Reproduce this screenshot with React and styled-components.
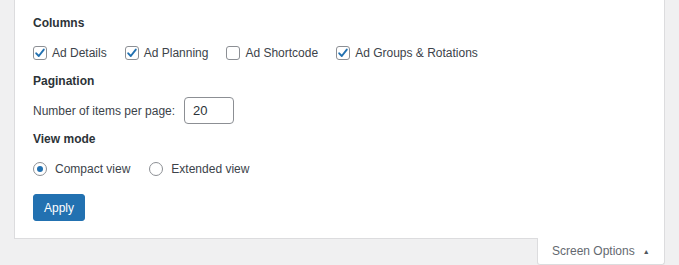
import React from "react";
import styled, { createGlobalStyle } from "styled-components";

const GlobalStyle = createGlobalStyle`
  body {
    margin: 0;
    background: #f0f0f1;
    font-family: "Liberation Sans", Arial, sans-serif;
    color: #3c434a;
  }
`;

const columns = [
  { label: "Ad Details", checked: true },
  { label: "Ad Planning", checked: true },
  { label: "Ad Shortcode", checked: false },
  { label: "Ad Groups & Rotations", checked: true },
];

const App = () => {
  return (
    <Wrapper>
      <GlobalStyle />
      <Panel>
        <Heading>Columns</Heading>
        <Row>
          {columns.map((item, index) => (
            <Option key={index}>
              <Box>
                {item.checked && (
                  <svg width="12" height="12" viewBox="0 0 12 12">
                    <path
                      d="M2.2 6.3 L4.8 9 L9.8 2.6"
                      fill="none"
                      stroke="#2271b1"
                      strokeWidth="1.9"
                      strokeLinecap="round"
                      strokeLinejoin="round"
                    />
                  </svg>
                )}
              </Box>
              {item.label}
            </Option>
          ))}
        </Row>
        <Heading>Pagination</Heading>
        <Row>
          <Option>
            Number of items per page:
            <NumberInput>20</NumberInput>
          </Option>
        </Row>
        <Heading>View mode</Heading>
        <Row gap={19}>
          <Option>
            <Radio checked />
            Compact view
          </Option>
          <Option>
            <Radio />
            Extended view
          </Option>
        </Row>
        <ApplyButton>Apply</ApplyButton>
      </Panel>
      <TabBar>
        <Tab>
          Screen Options <Arrow>▲</Arrow>
        </Tab>
      </TabBar>
      <Divider />
    </Wrapper>
  );
};

const Wrapper = styled.div`
  width: 651px;
  margin-left: 14px;
  font-size: 12px;
`;

const Panel = styled.div`
  background: #fff;
  border: 1px solid #dcdcde;
  border-top: none;
  padding: 16px 18px 17px;
`;

const Heading = styled.div`
  font-weight: bold;
  font-size: 12px;
  color: #2c3338;
  line-height: 14px;
`;

const Row = styled.div`
  display: flex;
  align-items: center;
  gap: ${(p) => p.gap || 18}px;
  margin: 9px 0 8px;
  min-height: 27px;
`;

const Option = styled.label`
  display: flex;
  align-items: center;
  gap: 5px;
  line-height: 14px;
`;

const Box = styled.span`
  box-sizing: border-box;
  width: 14px;
  height: 14px;
  border: 1px solid #8c8f94;
  border-radius: 3px;
  display: flex;
  align-items: center;
  justify-content: center;
  background: #fff;
`;

const Radio = styled.span`
  box-sizing: border-box;
  width: 14px;
  height: 14px;
  border: 1px solid #8c8f94;
  border-radius: 50%;
  margin-right: 3px;
  display: flex;
  align-items: center;
  justify-content: center;
  &::after {
    content: "";
    width: 6px;
    height: 6px;
    border-radius: 50%;
    background: #2271b1;
    display: ${(p) => (p.checked ? "block" : "none")};
  }
`;

const NumberInput = styled.span`
  box-sizing: border-box;
  width: 50px;
  height: 27px;
  margin-left: 4px;
  border: 1px solid #8c8f94;
  border-radius: 4px;
  padding-left: 8px;
  display: flex;
  align-items: center;
  color: #2c3338;
  font-size: 13px;
`;

const ApplyButton = styled.button`
  display: block;
  width: 52px;
  height: 27px;
  margin-top: 12px;
  background: #2271b1;
  border: 1px solid #2271b1;
  border-radius: 3px;
  color: #fff;
  font-family: inherit;
  font-size: 12px;
  padding: 0;
`;

const TabBar = styled.div`
  display: flex;
  justify-content: flex-end;
`;

const Tab = styled.div`
  position: relative;
  margin-top: -1px;
  width: 128px;
  height: 27px;
  box-sizing: border-box;
  background: #fff;
  border: 1px solid #dcdcde;
  border-top: none;
  border-radius: 0 0 3px 3px;
  display: flex;
  align-items: center;
  padding-left: 14px;
  color: #646970;
  font-size: 12px;
`;

const Arrow = styled.span`
  font-size: 7px;
  margin-left: 8px;
  color: #50575e;
`;

const Divider = styled.div`
  margin-left: 1px;
  border-top: 1px solid #dcdcde;
`;

export default App;
